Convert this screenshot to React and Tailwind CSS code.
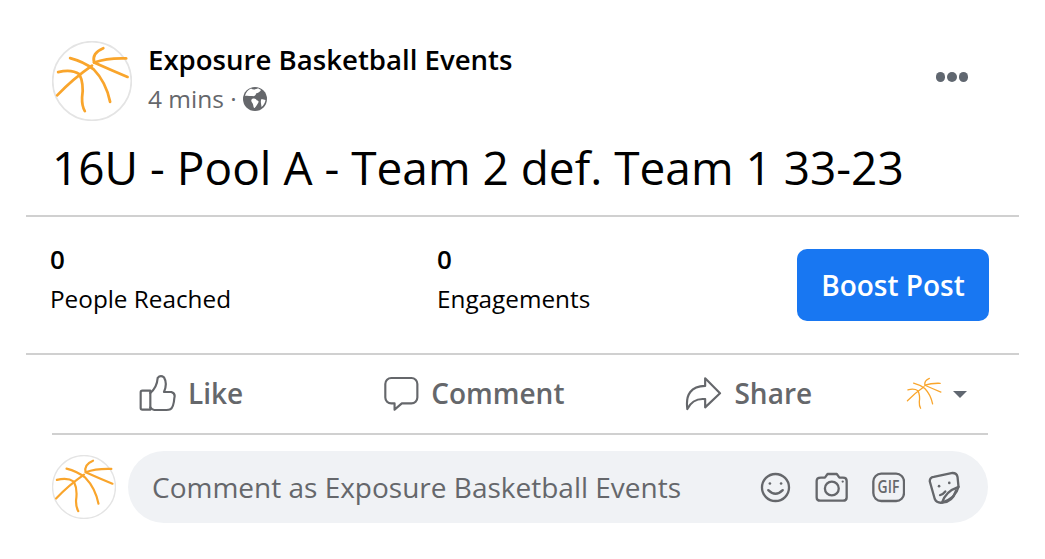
import React from "react";

const Ball = ({ className, ring = true, w = 8 }) => (
  <svg viewBox="68 65 234 234" className={className}>
    {ring && <circle cx="185" cy="182" r="115" fill="#fff" stroke="#e4e4e4" strokeWidth="5" />}
    <g fill="none" stroke="#f9a52c" strokeWidth={w} strokeLinecap="round" strokeLinejoin="round">
      <path d="M86 156Q125 146 148 162Q162 190 156 230Q155 255 164 270" />
      <path d="M83 224Q130 175 185 137" />
      <path d="M121 115Q160 125 190 148Q226 185 238 243" />
      <path d="M218 86Q184 100 191 128Q240 150 289 170" />
      <path d="M191 128Q230 114 285 116" />
    </g>
  </svg>
);

const Like = () => (
  <svg viewBox="58 40 114 114" className="w-[38px] h-[38px]" fill="none" stroke="#65676b" strokeWidth="6.5" strokeLinejoin="round" strokeLinecap="round">
    <path d="M92 90H68q-5 0-5 5V142q0 5 5 5H92Z" />
    <path d="M92 97Q112 80 114 52Q122 42 133 50Q144 68 133 94H155Q168 98 164 112Q162 140 152 146Q148 148 140 148H104Q96 147 92 140" />
  </svg>
);
const Comment = () => (
  <svg viewBox="785 40 112 112" className="w-[37px] h-[37px]" fill="none" stroke="#65676b" strokeWidth="6.5" strokeLinejoin="round">
    <path d="M810 49H871a18 18 0 0 1 18 18V108a18 18 0 0 1-18 18H842L820 145V126H810a18 18 0 0 1-18-18V67a18 18 0 0 1 18-18Z" />
  </svg>
);
const Share = () => (
  <svg viewBox="44 46 112 106" className="w-[37px] h-[35px]" fill="none" stroke="#65676b" strokeWidth="6.5" strokeLinejoin="round">
    <path d="M105 53L150 98L105 141V116Q68 112 51 146Q42 78 105 76Z" />
  </svg>
);
const Globe = () => (
  <svg viewBox="0 0 24 24" className="w-6 h-6 ml-[6px]">
    <circle cx="12" cy="12" r="12" fill="#65676b" />
    <path fill="#fff" d="M8 1.500C10 3 13 2.500 15 1.300L18 3C17 5 15 6 13 6.500C13 8.500 11 9.500 9 9C7 9.500 4.500 8 2 9C2.500 6 5 2.800 8 1.500ZM9 12C11 11 13 11.500 14 13.500C16 13.500 16 15.500 14.500 17C13.500 18.500 12.500 21 11 21C10 19 10.500 17 9 15.500C8 14 8 13 9 12ZM18.500 12L22.500 13C22 16 20.500 18.500 18.500 20C18.500 17.500 17 14.500 18.500 12Z" />
  </svg>
);
const BarIcons = () => (
  <div className="flex items-center gap-[24px] ml-auto mr-[28px]">
    <svg viewBox="45 35 94 94" className="w-[31px] h-[31px] translate-x-[1px]" fill="none" stroke="#65676b" strokeWidth="7" strokeLinecap="round">
      <circle cx="92" cy="82" r="41" />
      <circle cx="75" cy="70" r="4" fill="#65676b" stroke="none" />
      <circle cx="109" cy="70" r="4" fill="#65676b" stroke="none" />
      <path d="M70 90Q92 112 114 90" />
    </svg>
    <svg viewBox="210 35 100 94" className="w-[33px] h-[31px] translate-x-[1px]" fill="none" stroke="#65676b" strokeWidth="7" strokeLinejoin="round">
      <path d="M228 52H240L248 41H276L284 52H295Q306 52 306 62V112Q306 122 295 122H226Q215 122 215 112V62Q215 52 228 52Z" />
      <circle cx="261" cy="85" r="21" />
      <circle cx="294" cy="64" r="3.500" fill="#65676b" stroke="none" />
    </svg>
    <svg viewBox="378 35 100 94" className="w-[33px] h-[31px] translate-x-[1px]" fill="none">
      <rect x="382" y="40" width="93" height="83" rx="24" stroke="#65676b" strokeWidth="7" />
      <text x="428" y="100" textAnchor="middle" fontFamily="'Open Sans', sans-serif" fontSize="56" fontWeight="600" fill="#65676b" textLength="66" lengthAdjust="spacingAndGlyphs">GIF</text>
    </svg>
    <svg viewBox="548 30 96 100" className="w-[32px] h-[33px]" fill="none" stroke="#65676b" strokeWidth="7" strokeLinejoin="round" strokeLinecap="round">
      <path d="M553 62Q552 50 565 48L622 36Q635 36 637 48L640 78Q632 112 590 126Q574 128 568 115Z" />
      <path d="M590 126Q600 92 640 78M590 126Q622 124 632 90" />
      <circle cx="581" cy="76" r="4" fill="#65676b" stroke="none" />
      <circle cx="612" cy="66" r="4" fill="#65676b" stroke="none" />
      <path d="M584 103Q592 102 600 92" />
    </svg>
  </div>
);

export default function App() {
  return (
    <div className="w-[1045px] h-[559px] bg-white pt-[41px] px-[26px] text-black" style={{ fontFamily: "'Open Sans', 'Noto Sans', sans-serif" }}>
      <div className="flex pl-[26px] h-[80px]">
        <Ball className="w-20 h-20 shrink-0" />
        <div className="ml-4 pt-[1px]">
          <div className="text-[27.600px] leading-[34px] font-semibold">Exposure Basketball Events</div>
          <div className="flex items-center text-[24.500px] leading-[34px] text-[#65676b] mt-[6px]">
            4 mins · <Globe />
          </div>
        </div>
        <div className="ml-auto mr-[51px] mt-[31px] flex gap-[2px]">
          <span className="w-[9.500px] h-[9.500px] rounded-full bg-[#606770]" />
          <span className="w-[9.500px] h-[9.500px] rounded-full bg-[#606770]" />
          <span className="w-[9.500px] h-[9.500px] rounded-full bg-[#606770]" />
        </div>
      </div>
      <div className="pl-[26px] mt-[14px] h-[80px] text-[46px] leading-[64px] whitespace-nowrap">16U - Pool A - Team 2 def. Team 1 33-23</div>
      <div className="border-t-2 border-[#d0d0d0] h-[138px] flex pl-6 pr-[30px] items-start">
        <div className="w-[387px] pt-[24px]">
          <div className="text-[26px] leading-[36px] font-semibold">0</div>
          <div className="text-[24.300px] leading-[36px] mt-[4px]">People Reached</div>
        </div>
        <div className="pt-[24px]">
          <div className="text-[26px] leading-[36px] font-semibold">0</div>
          <div className="text-[24.300px] leading-[36px] mt-[4px]">Engagements</div>
        </div>
        <div className="ml-auto mt-[32px] w-[192px] h-[72px] rounded-[10px] bg-[#1877f2] text-white flex items-center justify-center text-[28px] font-semibold">Boost Post</div>
      </div>
      <div className="border-t-2 border-[#d0d0d0] pl-[26px] pr-[31px]">
        <div className="h-[80px] flex items-center border-b-2 border-[#d0d0d0] text-[28px] font-semibold text-[#65676b]">
          <div className="ml-[87px] flex items-center gap-[11px] -translate-y-[1px]"><Like /><span>Like</span></div>
          <div className="ml-[140px] flex items-center gap-[11px] -translate-y-[1px]"><Comment /><span>Comment</span></div>
          <div className="ml-[121px] flex items-center gap-[12px] -translate-y-[1px]"><Share /><span>Share</span></div>
          <div className="ml-auto mr-[21px] flex items-center gap-[10px]">
            <Ball ring={false} w={8} className="w-[38px] h-[38px]" />
            <span className="w-0 h-0 border-x-[7px] border-x-transparent border-t-[7px] border-t-[#606770]" />
          </div>
        </div>
        <div className="flex items-center mt-[16px]">
          <Ball className="w-16 h-16 shrink-0" />
          <div className="ml-3 flex-1 h-[72px] rounded-full bg-[#f0f2f5] flex items-center pl-6 text-[28px] text-[#65676b] whitespace-nowrap">
            Comment as Exposure Basketball Events
            <BarIcons />
          </div>
        </div>
      </div>
    </div>
  );
}
